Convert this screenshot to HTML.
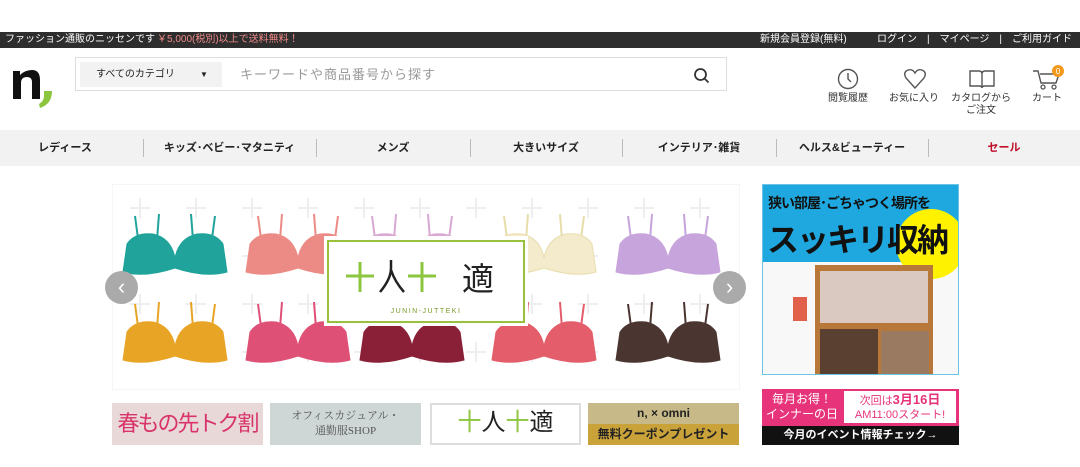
<!DOCTYPE html>
<html><head><meta charset="utf-8">
<style>
*{margin:0;padding:0;box-sizing:border-box}
body{width:1080px;height:467px;overflow:hidden;background:#fff;font-family:"Liberation Sans","Noto Sans CJK JP",sans-serif;position:relative}
.abs{position:absolute}
.top{left:0;top:32px;width:1080px;height:16px;background:#2e2e2e;color:#fff;font-size:10px;line-height:16px}
.nav{left:0;top:130px;width:1080px;height:36px;background:#f2f2f2;font-size:11px;font-weight:bold;color:#222}
.nav span{position:absolute;top:0;line-height:36px;text-align:center}
.nav i{position:absolute;top:9px;width:1px;height:18px;background:#bbb}
.ic{font-size:10px;color:#333;text-align:center;line-height:12px}
</style></head><body>
<div class="abs top">
 <span class="abs" style="left:5px">ファッション通販のニッセンです</span>
 <span class="abs" style="left:157px;color:#f08a8a">￥5,000(税別)以上で送料無料！</span>
 <span class="abs" style="left:760px">新規会員登録(無料)</span>
 <span class="abs" style="left:877px">ログイン　|　マイページ　|　ご利用ガイド</span>
</div>
<!-- logo -->
<svg class="abs" style="left:10px;top:66px" width="46" height="46" viewBox="0 0 46 46">
 <path d="M3 5 H10 V9 Q15 4 22 4 Q30 4 30 14 V33 H22 V16 Q22 11 17 11 Q11 11 11 17 V33 H3 Z" fill="#111"/>
 <path d="M34 25 H42 Q42 38 30 42 L29 38 Q34 35 34 30 Z" fill="#8cc63f"/>
</svg>
<div class="abs" style="left:75px;top:57px;width:652px;height:34px;border:1px solid #ddd"></div>
<div class="abs" style="left:80px;top:62px;width:142px;height:25px;background:#f2f2f2;font-size:10px;line-height:25px;color:#222"><span style="margin-left:16px">すべてのカテゴリ</span><span style="position:absolute;left:120px;font-size:8px">▼</span></div>
<div class="abs" style="left:240px;top:64px;font-size:13px;color:#999;letter-spacing:1px">キーワードや商品番号から探す</div>
<svg class="abs" style="left:693px;top:67px" width="17" height="17" viewBox="0 0 17 17"><circle cx="7.5" cy="7.5" r="5.5" fill="none" stroke="#333" stroke-width="1.8"/><path d="M11.5 11.5 L15.5 15.5" stroke="#333" stroke-width="1.8"/></svg>
<!-- icons -->
<svg class="abs" style="left:837px;top:68px" width="22" height="22" viewBox="0 0 22 22"><circle cx="11" cy="11" r="9.5" fill="none" stroke="#555" stroke-width="1.4"/><path d="M11 5 V11 L14 14" fill="none" stroke="#555" stroke-width="1.4"/></svg>
<div class="abs ic" style="left:818px;top:93px;width:60px">閲覧履歴</div>
<svg class="abs" style="left:903px;top:68px" width="24" height="22" viewBox="0 0 24 22"><path d="M12 20 L3 10 Q0 5 4 2.5 Q9 0 12 5 Q15 0 20 2.5 Q24 5 21 10 Z" fill="none" stroke="#555" stroke-width="1.4"/></svg>
<div class="abs ic" style="left:884px;top:93px;width:60px">お気に入り</div>
<svg class="abs" style="left:969px;top:69px" width="26" height="20" viewBox="0 0 26 20"><path d="M1 2 H10 Q13 2 13 5 V19 Q13 17 10 17 H1 Z M25 2 H16 Q13 2 13 5 V19 Q13 17 16 17 H25 Z" fill="none" stroke="#555" stroke-width="1.4"/></svg>
<div class="abs ic" style="left:950px;top:93px;width:62px">カタログから<br>ご注文</div>
<svg class="abs" style="left:1032px;top:64px" width="34" height="28" viewBox="0 0 34 28"><path d="M1 7 H6 L9 19 H24 L27 10 H8" fill="none" stroke="#555" stroke-width="1.4"/><circle cx="11" cy="23" r="2" fill="none" stroke="#555" stroke-width="1.3"/><circle cx="22" cy="23" r="2" fill="none" stroke="#555" stroke-width="1.3"/><circle cx="26" cy="7" r="6" fill="#f39a1e"/><text x="26" y="10" font-size="8" fill="#fff" text-anchor="middle" font-family="Liberation Sans">0</text></svg>
<div class="abs ic" style="left:1017px;top:93px;width:60px">カート</div>
<!-- nav -->
<div class="abs nav">
 <span style="left:0;width:130px">レディース</span><i style="left:143px"></i>
 <span style="left:143px;width:173px">キッズ･ベビー･マタニティ</span><i style="left:316px"></i>
 <span style="left:316px;width:154px">メンズ</span><i style="left:470px"></i>
 <span style="left:470px;width:152px">大きいサイズ</span><i style="left:622px"></i>
 <span style="left:622px;width:154px">インテリア･雑貨</span><i style="left:776px"></i>
 <span style="left:776px;width:152px">ヘルス&amp;ビューティー</span><i style="left:928px"></i>
 <span style="left:928px;width:152px;color:#c0102a">セール</span>
</div>
<!-- main banner -->
<svg class="abs" style="left:112px;top:184px" width="628" height="206" viewBox="0 0 628 206">
 <defs>
  <pattern id="g" width="56" height="48" patternUnits="userSpaceOnUse"><path d="M28 14 V34 M18 24 H38" stroke="#eee" stroke-width="2"/></pattern>
  <g id="bra"><path d="M-40 -30 L-36 0 M-16 -32 L-18 -6 M16 -32 L18 -6 M40 -30 L36 0" stroke-width="2" fill="none"/><path d="M-48 -2 Q-40 -14 -22 -12 Q-4 -8 0 12 Q4 -8 22 -12 Q40 -14 48 -2 L52 26 Q30 32 0 22 Q-30 32 -52 26 Z"/></g>
 </defs>
 <rect width="628" height="206" fill="#fff" stroke="#eee"/>
 <rect width="628" height="206" fill="url(#g)"/>
 <use href="#bra" x="63" y="62" fill="#1fa39b" stroke="#1fa39b"/>
 <use href="#bra" x="186" y="62" fill="#ec8a86" stroke="#ec8a86"/>
 <use href="#bra" x="300" y="62" fill="#d9a8d4" stroke="#d9a8d4"/>
 <use href="#bra" x="432" y="62" fill="#f3ebcc" stroke="#e8dcaa"/>
 <use href="#bra" x="556" y="62" fill="#c8a4dd" stroke="#c8a4dd"/>
 <use href="#bra" x="63" y="150" fill="#e8a424" stroke="#e8a424"/>
 <use href="#bra" x="186" y="150" fill="#df5077" stroke="#df5077"/>
 <use href="#bra" x="300" y="150" fill="#8a2038" stroke="#8a2038"/>
 <use href="#bra" x="432" y="150" fill="#e35e6a" stroke="#e35e6a"/>
 <use href="#bra" x="556" y="150" fill="#4a3530" stroke="#4a3530"/>
 <rect x="212" y="52" width="204" height="90" fill="#fff"/>
 <rect x="216" y="57" width="196" height="81" fill="#fff" stroke="#9ac13c" stroke-width="2"/>
 <g stroke="#8cc63f" stroke-width="3"><path d="M234 92 H262 M248 78 V108 M296 92 H324 M310 78 V108"/></g>
 <path d="M279 76 L279 84 Q279 95 268 108 M279 86 Q283 98 292 108" stroke="#222" stroke-width="2.5" fill="none"/>
 <text x="350" y="106" font-size="32" fill="#222" font-family="Noto Sans CJK JP">適</text>
 <text x="314" y="129" font-size="7" fill="#7a9a2a" text-anchor="middle" letter-spacing="1.5" font-family="Liberation Sans">JUNIN-JUTTEKI</text>
</svg>
<div class="abs" style="left:105px;top:271px;width:33px;height:33px;border-radius:50%;background:#aaa;color:#fff;font-size:22px;line-height:31px;text-align:center">‹</div>
<div class="abs" style="left:713px;top:271px;width:33px;height:33px;border-radius:50%;background:#aaa;color:#fff;font-size:22px;line-height:31px;text-align:center">›</div>
<!-- right banner -->
<div class="abs" style="left:762px;top:184px;width:197px;height:191px;background:#f8f8f8;border:1px solid #6bc3e6;overflow:hidden">
 <div style="position:absolute;left:0;top:0;width:197px;height:77px;background:#1fa8e0"></div>
 <div style="position:absolute;left:133px;top:24px;width:70px;height:70px;border-radius:50%;background:#fff200"></div>
 <div style="position:absolute;left:5px;top:8px;font-size:14px;font-weight:bold;color:#111;white-space:nowrap;letter-spacing:-1px">狭い部屋･ごちゃつく場所を</div>
 <div style="position:absolute;left:4px;top:30px;font-size:32px;font-weight:bold;color:#111;white-space:nowrap;letter-spacing:-2px">スッキリ収納</div>
 <div style="position:absolute;left:52px;top:80px;width:118px;height:111px;background:#b8783a"></div>
 <div style="position:absolute;left:57px;top:86px;width:108px;height:52px;background:#d9c9c0"></div>
 <div style="position:absolute;left:57px;top:144px;width:58px;height:47px;background:#5a4030"></div>
 <div style="position:absolute;left:118px;top:146px;width:48px;height:45px;background:#9a7a60"></div>
 <div style="position:absolute;left:30px;top:112px;width:14px;height:24px;background:#e0604a"></div>
</div>
<!-- bottom banners -->
<div class="abs" style="left:112px;top:403px;width:151px;height:42px;background:#e8d8d8;color:#d8336a;font-size:22px;line-height:42px;text-align:center;white-space:nowrap;letter-spacing:-2px">春もの先トク割</div>
<div class="abs" style="left:270px;top:403px;width:151px;height:42px;background:#cfd6d6;color:#555;font-size:11px;line-height:15px;text-align:center;padding-top:6px;font-family:'Liberation Serif','Noto Serif CJK SC',serif">オフィスカジュアル・<br>通勤服SHOP</div>
<div class="abs" style="left:430px;top:403px;width:151px;height:42px;background:#fff;border:2px solid #ddd;text-align:center;font-size:24px;line-height:36px;color:#222"><span style="color:#8cc63f">十</span>人<span style="color:#8cc63f">十</span>適</div>
<div class="abs" style="left:588px;top:403px;width:151px;height:42px;background:#c8ba88">
 <div style="position:absolute;left:0;top:0;width:151px;height:20px;text-align:center;font-size:12px;line-height:20px;color:#222;font-weight:bold">n, × omni</div>
 <div style="position:absolute;left:0;top:21px;width:151px;height:21px;background:#c9a23a;color:#222;font-size:12px;line-height:21px;text-align:center;font-weight:bold">無料クーポンプレゼント</div>
</div>
<div class="abs" style="left:762px;top:389px;width:197px;height:56px;background:#e6337a">
 <div style="position:absolute;left:0;top:0;width:80px;height:36px;color:#fff;font-size:12px;line-height:15px;text-align:center;padding-top:3px">毎月お得！<br>インナーの日</div>
 <div style="position:absolute;left:82px;top:2px;width:112px;height:32px;background:#fff;color:#e6337a;font-size:11px;line-height:14px;text-align:center;padding-top:2px">次回は<b style="font-size:13px">3月16日</b><br>AM11:00スタート!</div>
 <div style="position:absolute;left:0;top:37px;width:197px;height:19px;background:#111;color:#fff;font-size:11px;line-height:19px;text-align:center;font-weight:bold">今月のイベント情報チェック→</div>
</div>
</body></html>
